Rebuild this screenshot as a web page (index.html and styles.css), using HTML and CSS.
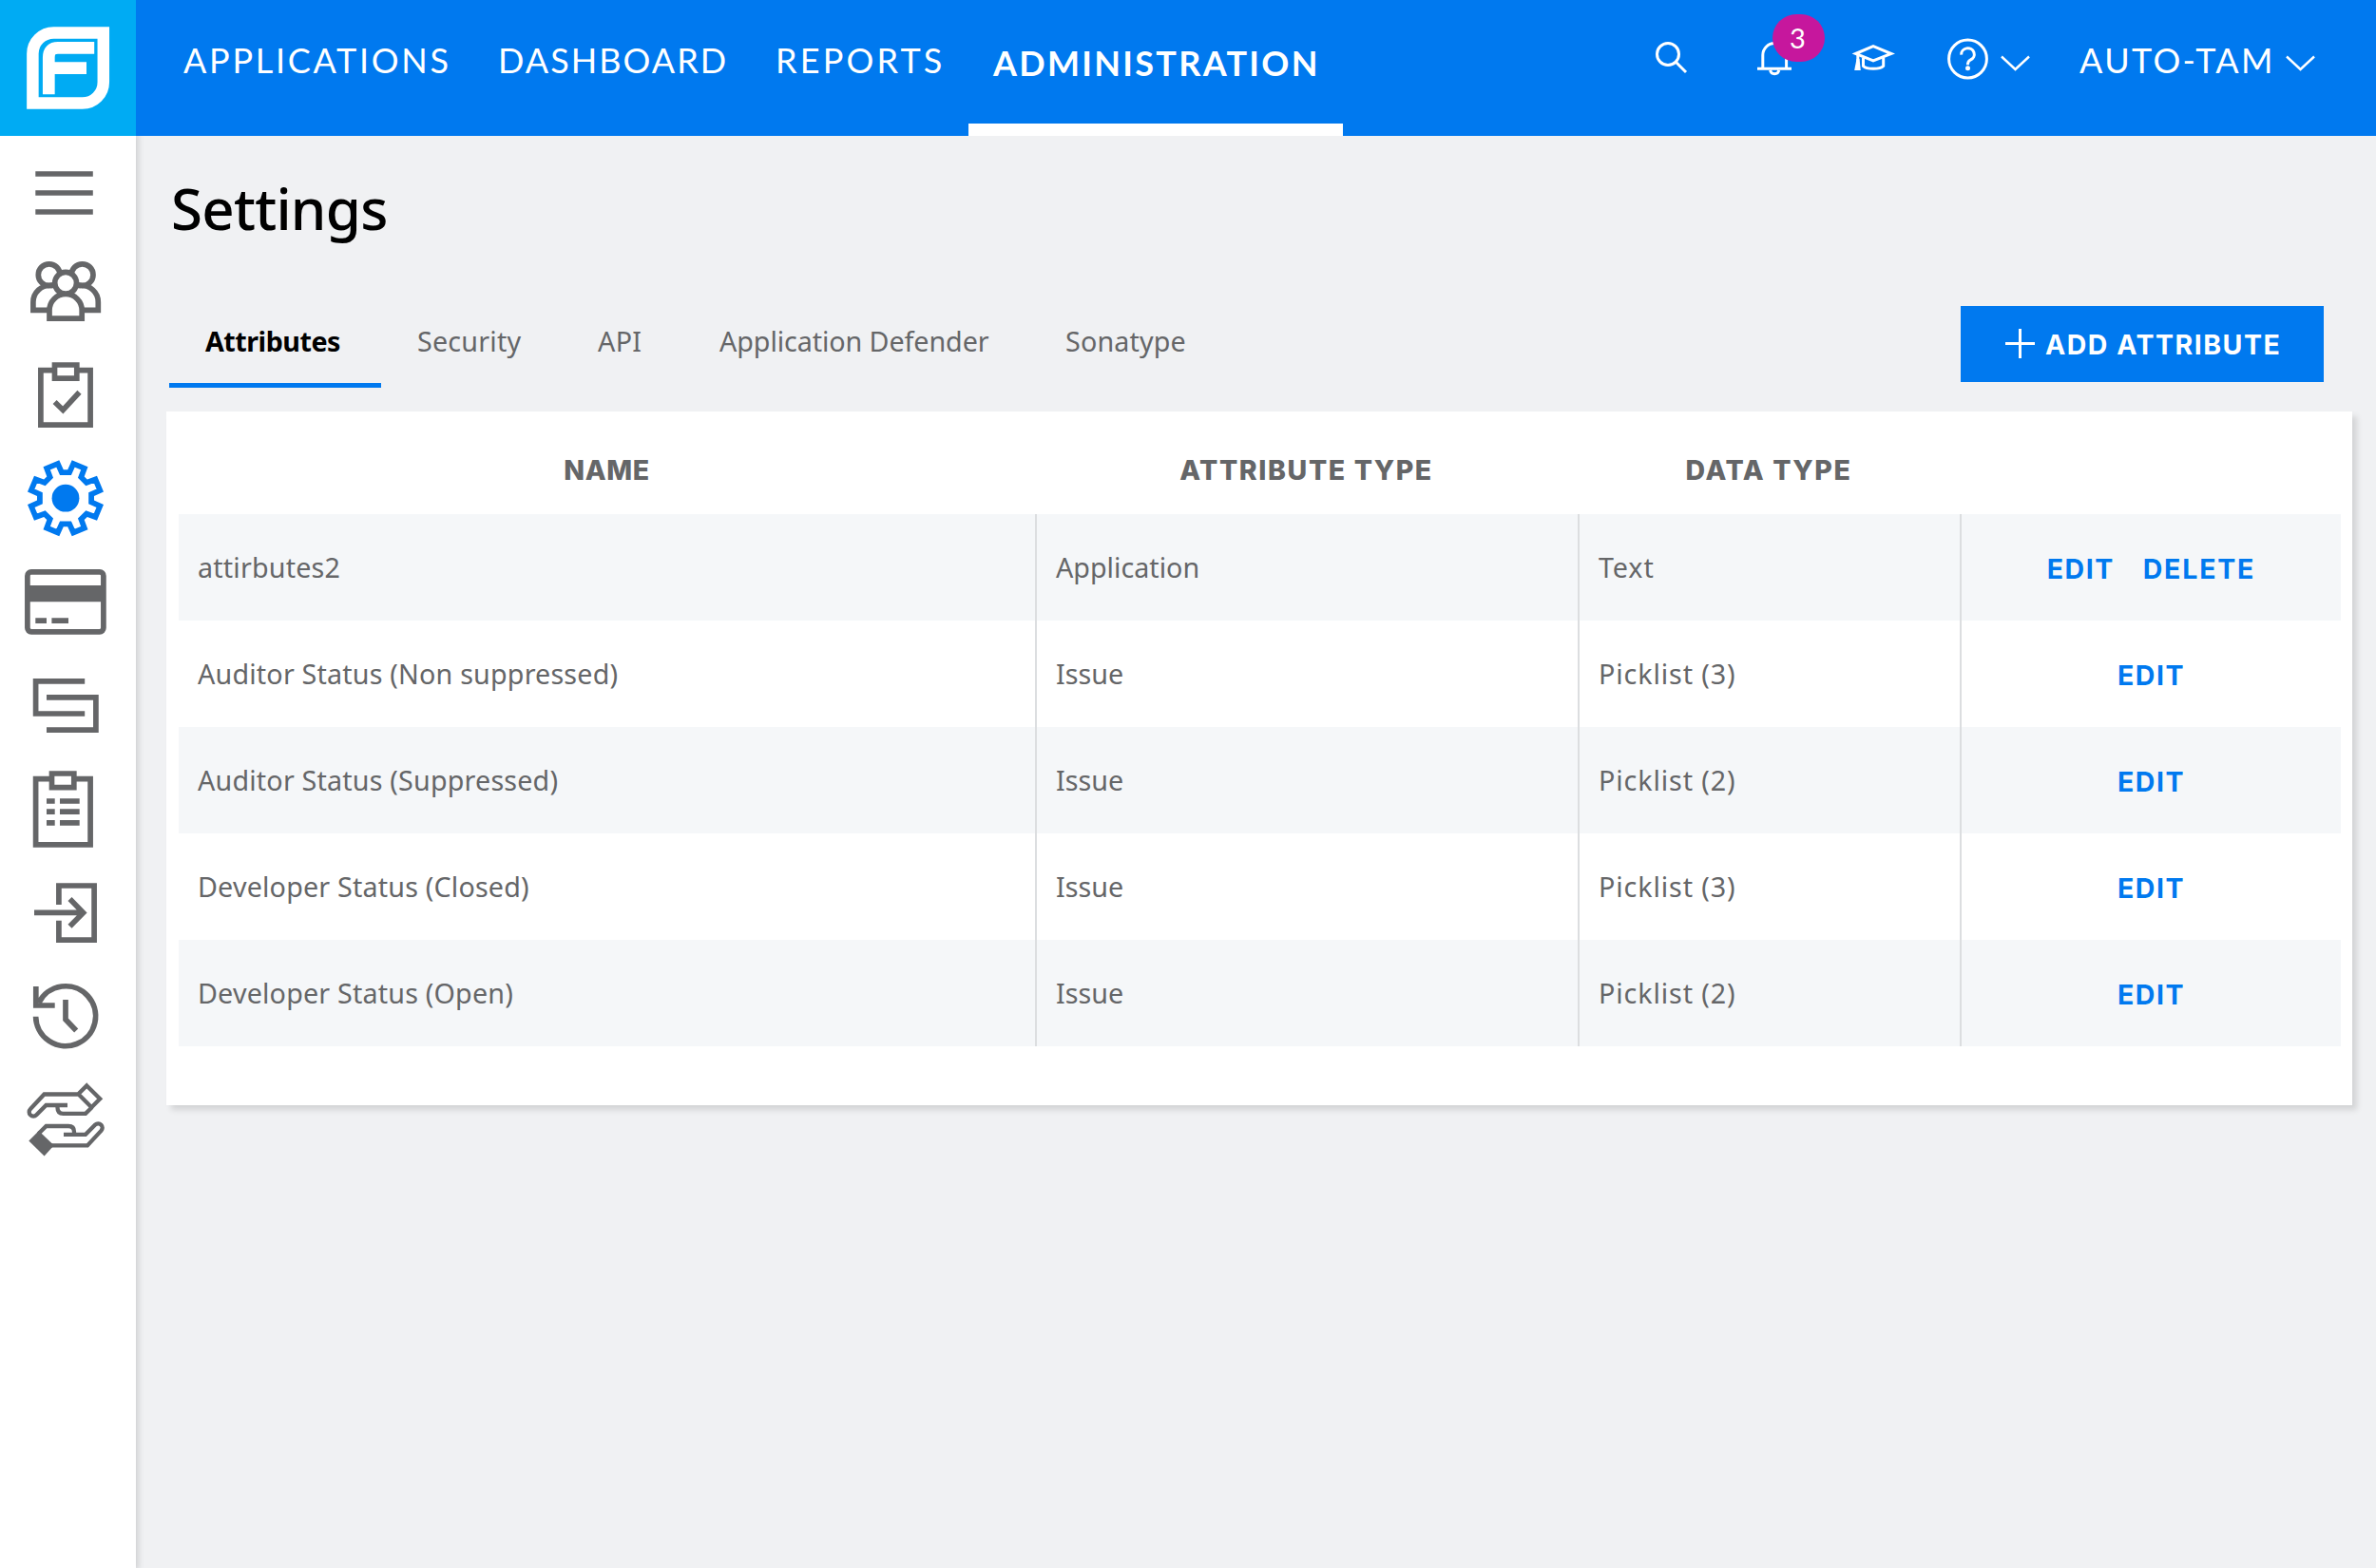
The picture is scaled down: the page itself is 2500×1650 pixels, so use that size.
FILE: index.html
```html
<!DOCTYPE html>
<html lang="en">
<head>
<meta charset="utf-8">
<title>Settings</title>
<link rel="stylesheet" href="styles.css">
</head>
<body>
<header class="header">
  <a class="logo" aria-label="Home">
    <svg width="143" height="143" viewBox="0 0 143 143" fill="none" stroke="#fff" stroke-width="12.5">
      <path d="M34.4 108.6V56.5A22.1 22.1 0 0 1 56.5 34.4H108.8V86.5A22.1 22.1 0 0 1 86.7 108.6Z"/>
      <path stroke-width="12.7" d="M51.3 99.3V60.5Q51.3 50.4 61 50.4H99.2M51.3 71.7H91"/>
    </svg>
  </a>
  <nav class="nav">
    <a class="nav-item nav-applications">APPLICATIONS</a>
    <a class="nav-item nav-dashboard">DASHBOARD</a>
    <a class="nav-item nav-reports">REPORTS</a>
    <a class="nav-item nav-active">ADMINISTRATION</a>
  </nav>
  <div class="tools">
    <svg class="tool tool-search" width="40" height="143" viewBox="1738 0 40 143"><circle cx="1755" cy="57" r="11.5"/><path d="M1763.3 65.3L1774 76"/></svg>
    <div class="bell">
      <svg class="tool" width="40" height="143" viewBox="1847 0 40 143"><path d="M1854.8 72V58A12.4 12.4 0 0 1 1879.6 58V72M1849 72.3H1885M1862.6 74A4.7 4.7 0 0 0 1871.8 74"/></svg>
      <span class="badge">3</span>
    </div>
    <svg class="tool tool-learn" width="48" height="143" viewBox="1947 0 48 143"><path d="M1952.5 56.5L1971 48.6L1990 56.5L1971 64Z"/><path d="M1960.5 61V69.5Q1963 72.3 1971 72.3T1981.7 69.5V61"/><path d="M1954.8 57V72"/><path class="solid" d="M1953.5 62H1956.5L1957.8 74H1951.2Z"/></svg>
    <svg class="tool tool-help" width="92" height="143" viewBox="2046 0 92 143"><circle cx="2070.5" cy="62" r="19.9"/><path d="M2063.7 57.6A6.8 6.4 0 1 1 2073.3 63Q2070.4 64.4 2070.4 68.3"/><circle class="solid" cx="2070.5" cy="71.8" r="2.5"/><path class="thin" d="M2106 59.5L2120.5 73L2135 59.5"/></svg>
    <span class="user">AUTO-TAM</span>
    <svg class="tool" width="34" height="143" viewBox="2403 0 34 143"><path class="thin" d="M2406 59.5L2420.5 73L2435 59.5"/></svg>
  </div>
</header>
<div class="body">
  <aside class="sidebar">
    <svg viewBox="0 143 143 109"><path d="M37.3 183H97.8M37.3 203H97.8M37.3 223H97.8"/></svg>
    <svg viewBox="0 252 143 109"><circle cx="51.7" cy="289.2" r="11.4"/><circle cx="86.6" cy="289.2" r="11.4"/><path d="M50 326.4H34.9V318A18 17.5 0 0 1 54 300.3H84A18 17.5 0 0 1 103.3 318V326.4H88"/><path class="cover" d="M52 335.2V326.5A17.1 17.1 0 0 1 86.2 326.5V335.2Z"/><circle class="cover" cx="69.1" cy="297.8" r="11.4"/></svg>
    <svg viewBox="0 361 143 109"><path d="M57.5 389.7H42.9V447.1H95.1V389.7H80.8M57.5 384H80.8V398.2H57.5ZM57.6 423L66.3 431.5L83.5 412.8"/></svg>
    <svg viewBox="0 470 143 109"><defs><clipPath id="gear"><path id="teeth" d="M62.3 484.2L66.8 494.2H71.2L75.7 484.2L92.5 491.2L88.7 501.4L91.8 504.5L102 500.7L109 517.5L99 522V526.4L109 530.9L102 547.7L91.8 543.9L88.7 547L92.5 557.2L75.7 564.2L71.2 554.2H66.8L62.3 564.2L45.5 557.2L49.3 547L46.2 543.9L36 547.7L29 530.9L39 526.4V522L29 517.5L36 500.7L46.2 504.5L49.3 501.4L45.5 491.2Z"/></clipPath></defs><use class="gear" href="#teeth" clip-path="url(#gear)"/><circle class="gear-hub" cx="69" cy="524.2" r="14.4"/></svg>
    <svg viewBox="0 579 143 109"><rect x="28.9" y="601.9" width="80" height="62.9" rx="4"/><path class="fill" d="M28 616H110V633.2H28ZM37.3 650.3H49V656H37.3ZM54.4 650.3H72V656H54.4Z"/></svg>
    <svg viewBox="0 688 143 109"><path d="M89.2 716.9H37.6V751H89.2M49 733.9H100.9V768.1H49"/></svg>
    <svg viewBox="0 797 143 109"><path d="M54.5 819.7H37.6V888.9H95.1V819.7H77.8M54.5 814H77.8V828.6H54.5ZM49 843H57.7M63 843H83.7M49 854.2H57.7M63 854.2H83.7M49 865.8H57.7M63 865.8H83.7"/></svg>
    <svg viewBox="0 906 143 109"><path d="M61.9 952V932H99.1V989.1H61.9V968.8M36 960.4H87M73.5 946L87.6 960.4L73.5 974.8"/></svg>
    <svg viewBox="0 1015 143 109"><path d="M37.6 1069.8A31.5 31.5 0 1 0 41 1055M37.8 1038V1058H57.7M69 1052V1072.8L80.2 1084.5"/></svg>
    <svg class="hands" viewBox="0 1124 143 109"><path d="M71 1163H48.5L38.3 1173.3A4.3 4.3 0 0 1 32 1167L46.5 1151.5H83M60.5 1163V1165.5Q60.5 1171.8 66.5 1171.8H90L97 1165M91.3 1142.4L105.2 1156.3L96.3 1165.2L82.4 1151.3Z"/><path d="M67 1193.8H90L100.2 1183.6A4.3 4.3 0 0 1 106.4 1189.9L92 1205.4H54M40.5 1193L48.6 1185H72Q78 1185 78 1191V1193.8"/><path class="fill" d="M30.3 1200.6L40.8 1190L56.8 1205.2L46.6 1216.6Z"/></svg>
  </aside>
  <main class="main">
    <h1 class="title">Settings</h1>
    <div class="bar">
      <div class="tabs">
        <a class="tab tab-active">Attributes</a>
        <a class="tab tab-security">Security</a>
        <a class="tab tab-api">API</a>
        <a class="tab tab-defender">Application Defender</a>
        <a class="tab tab-sonatype">Sonatype</a>
      </div>
      <button class="add"><svg width="31" height="31" viewBox="0 0 31 31"><path d="M15.5 0V31M0 15.5H31" stroke="#fff" stroke-width="3"/></svg><span>ADD ATTRIBUTE</span></button>
    </div>
    <section class="card">
      <div class="row head"><div class="name-head">NAME</div><div>ATTRIBUTE TYPE</div><div>DATA TYPE</div><div></div></div>
      <div class="row"><div>attirbutes2</div><div class="type">Application</div><div class="data">Text</div><div class="actions"><a>EDIT</a><a class="delete">DELETE</a></div></div>
      <div class="row"><div>Auditor Status (Non suppressed)</div><div class="type">Issue</div><div class="data">Picklist (3)</div><div class="actions"><a>EDIT</a></div></div>
      <div class="row"><div>Auditor Status (Suppressed)</div><div class="type">Issue</div><div class="data">Picklist (2)</div><div class="actions"><a>EDIT</a></div></div>
      <div class="row"><div>Developer Status (Closed)</div><div class="type">Issue</div><div class="data">Picklist (3)</div><div class="actions"><a>EDIT</a></div></div>
      <div class="row"><div>Developer Status (Open)</div><div class="type">Issue</div><div class="data">Picklist (2)</div><div class="actions"><a>EDIT</a></div></div>
    </section>
  </main>
</div>
</body>
</html>
```
FILE: styles.css
```css
* { box-sizing: border-box; }

body {
  margin: 0;
  min-height: 1650px;
  display: flex;
  flex-direction: column;
  background: #f0f1f3;
  color: #656668;
  font-family: "Noto Sans", "Open Sans", sans-serif;
  font-size: 28.7px;
}

svg { display: block; flex: none; }

/* Header */
.header { display: flex; height: 143px; background: #0079ef; color: #fff; font-family: Lato, sans-serif; }
.logo { width: 143px; background: #00abf3; }
.nav { display: flex; font-size: 36px; line-height: 126px; padding-left: 50px; white-space: nowrap; }
.nav-item { height: 143px; }
.nav-applications { width: 331px; letter-spacing: 2.7px; }
.nav-dashboard { width: 292px; letter-spacing: 2.05px; }
.nav-reports { width: 203px; letter-spacing: 3.2px; }
.nav-active {
  width: 394px;
  padding-left: 26px;
  border-bottom: 13px solid #fff;
  line-height: 132px;
  font-weight: 700;
  letter-spacing: 2.3px;
}
.tools { display: flex; margin-left: auto; padding-right: 63px; }
.tool { fill: none; stroke: #fff; stroke-width: 3; }
.tool .solid { fill: #fff; stroke: none; }
.tool .thin { stroke-width: 2.4; }
.tool-search { margin-right: 69px; }
.bell { position: relative; margin-right: 60px; }
.badge {
  position: absolute;
  left: 18px;
  top: 15px;
  width: 55px;
  height: 50px;
  padding-right: 2px;
  border-radius: 25px;
  background: #c6179d;
  font-size: 29px;
  line-height: 50px;
  text-align: center;
}
.tool-learn { margin-right: 51px; }
.tool-help { margin-right: 50px; }
.user { width: 215px; font-size: 36px; line-height: 126px; letter-spacing: 2.36px; white-space: nowrap; }

/* Page body */
.body { display: flex; flex: 1; }
.sidebar { width: 143px; background: #fff; box-shadow: 1px 0 6px 2px rgba(0, 0, 0, .13); clip-path: inset(0 -12px 0 0); }
.sidebar svg { width: 143px; height: 109px; fill: none; stroke: #656668; stroke-width: 5.7; }
.sidebar .fill { fill: #656668; stroke: none; }
.sidebar .cover { fill: #fff; }
.sidebar .gear { stroke: #0079ef; stroke-width: 11.6; }
.sidebar .gear-hub { fill: #0079ef; stroke: none; }
.sidebar .hands { stroke-width: 4.3; }

.main { flex: 1; padding: 0 25px 0 32px; }
.title { margin: 0 0 0 5px; height: 171px; line-height: 152px; font-size: 60px; font-weight: 500; letter-spacing: -.75px; color: #000; }
.bar { display: flex; justify-content: space-between; height: 119px; padding: 0 30px 0 3px; }
.tabs { display: flex; }
.tab { height: 94px; padding-left: 38px; line-height: 89px; white-space: nowrap; }
.tab-active { width: 223px; border-bottom: 5px solid #0079ef; color: #000; font-weight: 700; letter-spacing: -.5px; }
.tab-security { width: 190px; letter-spacing: .2px; }
.tab-api { width: 128px; letter-spacing: .3px; }
.tab-defender { width: 364px; letter-spacing: -.08px; }
.tab-sonatype { letter-spacing: .15px; }
.add {
  display: flex;
  align-items: center;
  width: 382px;
  height: 80px;
  margin-top: 8px;
  padding: 0 0 0 47px;
  border: 0;
  background: #0079ef;
  color: #fff;
  font: 700 28.5px/78px Inter, sans-serif;
  letter-spacing: 1.5px;
  white-space: nowrap;
}
.add svg { margin: 0 11px 2px 0; }
.add span { padding-top: 2px; }

/* Attributes table */
.card { height: 730px; padding: 13px 12px 0 13px; background: #fff; box-shadow: 5px 5px 6px rgba(0, 0, 0, .12); }
.row { display: grid; grid-template-columns: 901px 571px 402px 401px; height: 112px; line-height: 112px; letter-spacing: .18px; }
.row > div { padding-left: 20px; }
.row > div + div { border-left: 2px solid #dcdee0; }
.row:nth-child(even) { background: #f5f7f9; }
.row .type { letter-spacing: 0; }
.row .data { letter-spacing: .9px; }
.row.head { height: 95px; line-height: 97px; font-family: Inter, sans-serif; font-size: 28.5px; font-weight: 800; letter-spacing: 1.6px; }
.row.head > div { height: 95px; padding: 0; border: 0; text-align: center; }
.row .name-head { letter-spacing: .6px; }
.row .actions { display: flex; justify-content: center; gap: 30px; height: 112px; padding: 0; line-height: 114px; color: #0079ef; font-family: Inter, sans-serif; font-size: 28.5px; font-weight: 700; letter-spacing: 1.5px; }
.row .actions a { height: 112px; line-height: 115px; }
.actions .delete { letter-spacing: 1.8px; }
```
